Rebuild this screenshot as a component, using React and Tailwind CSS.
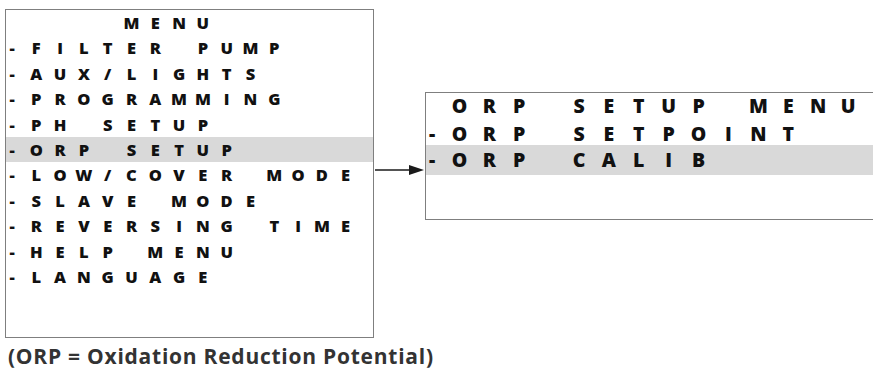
const mainMenu = [
    '     MENU',
    '-FILTER PUMP',
    '-AUX/LIGHTS',
    '-PROGRAMMING',
    '-PH SETUP',
    '-ORP SETUP',
    '-LOW/COVER MODE',
    '-SLAVE MODE',
    '-REVERSING TIME',
    '-HELP MENU',
    '-LANGUAGE',
];

const orpMenu = [' ORP SETUP MENU', '-ORP SETPOINT', '-ORP CALIB'];

// one LCD-style line: dash column, then fixed-width character cells
function LcdLine({ text, dashCell, cell }) {
    const [first, ...rest] = text.split('');
    return (
        <div className="flex items-center h-full">
            <span className={dashCell}>{first === '-' ? '-' : ''}</span>
            {rest.map((ch, i) => (
                <span key={i} className={cell}>
                    {ch === ' ' ? '' : ch}
                </span>
            ))}
        </div>
    );
}

export default function App() {
    return (
        <div className="w-[873px] h-[372px] bg-white overflow-hidden font-['Open_Sans',sans-serif] text-[#111]">
            <div className="flex items-start pt-[9px] pl-[5px]">
                {/* Main menu screen */}
                <div className="w-[369px] h-[329px] shrink-0 border-[1.5px] border-[#7f7f7f] text-[16.5px] font-extrabold">
                    {mainMenu.map((line, i) => (
                        <div
                            key={i}
                            className={`h-[25.4px] leading-[25.4px] ${line === '-ORP SETUP' ? 'bg-[#d9d9d9]' : ''}`}
                        >
                            <LcdLine
                                text={line}
                                dashCell="w-[18.4px] shrink-0 pl-[3.5px]"
                                cell="w-[23.8px] shrink-0 text-center"
                            />
                        </div>
                    ))}
                </div>

                {/* Arrow */}
                <svg width="51" height="12" viewBox="0 0 51 12" className="shrink-0 mt-[155px]">
                    <line x1="1" y1="6" x2="38" y2="6" stroke="#1a1a1a" strokeWidth="1.6" />
                    <polygon points="35,1 50,6 35,11" fill="#1a1a1a" />
                </svg>

                {/* ORP setup screen */}
                <div className="w-[470px] h-[127.5px] shrink-0 mt-[83px] border-[1.5px] border-r-0 border-[#7f7f7f] text-[19.5px] font-extrabold">
                    <div className="h-[26px] leading-[26px]">
                        <LcdLine text={orpMenu[0]} dashCell="w-[18.5px] shrink-0 pl-[3px]" cell="w-[29.9px] shrink-0 text-center" />
                    </div>
                    <div className="h-[26px] leading-[26px] pt-[3px]">
                        <LcdLine text={orpMenu[1]} dashCell="w-[18.5px] shrink-0 pl-[3px]" cell="w-[29.9px] shrink-0 text-center" />
                    </div>
                    <div className="h-[30px] leading-[30px] bg-[#d9d9d9]">
                        <LcdLine text={orpMenu[2]} dashCell="w-[18.5px] shrink-0 pl-[3px]" cell="w-[29.9px] shrink-0 text-center" />
                    </div>
                </div>
            </div>

            <p className="pl-[8px] mt-[4px] text-[21px] leading-[28px] tracking-[0.75px] font-bold text-[#333]">
                (ORP = Oxidation Reduction Potential)
            </p>
        </div>
    );
}
